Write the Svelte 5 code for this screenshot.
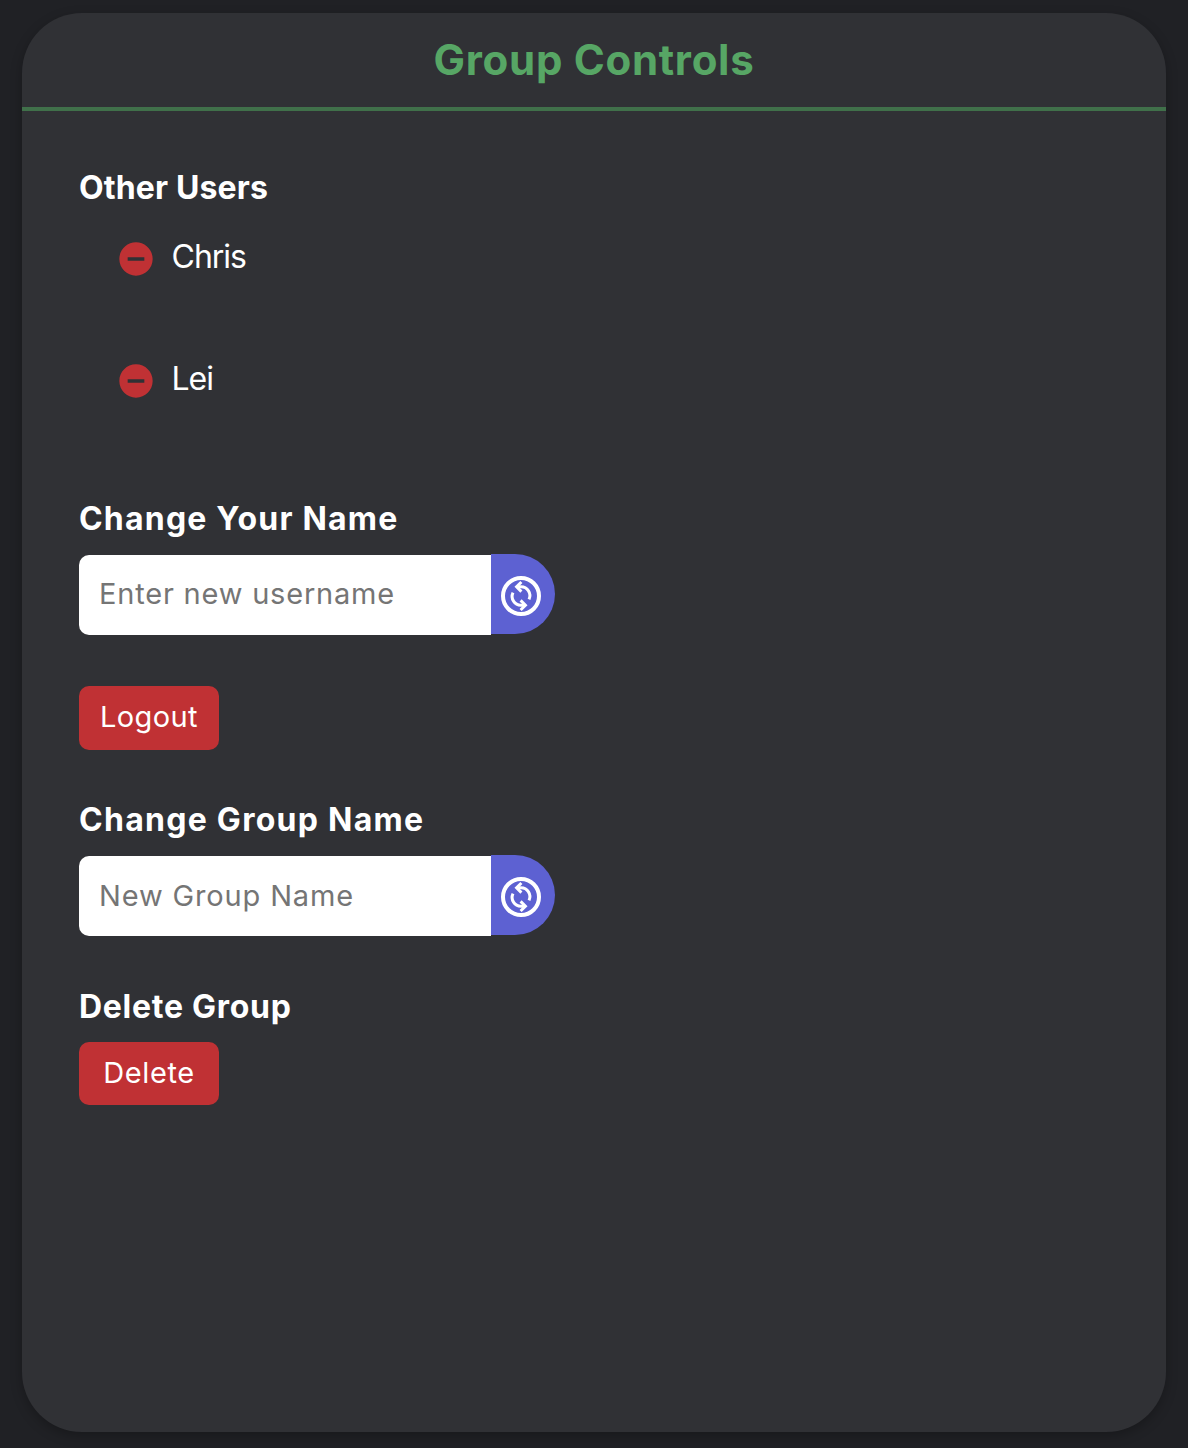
<script>
  const users = ['Chris', 'Lei'];
  let username = $state('');
  let groupName = $state('');
</script>

{#snippet changeIcon()}
  <svg class="change-icon" viewBox="0 0 24 24" aria-hidden="true">
    <circle cx="12" cy="12" r="9" stroke-width="2" />
    <g stroke-width="1.5">
      <path d="M12.2 5 9.8 7.4 12.2 9.8" />
      <path d="M10 7.4h2a4.4 4.4 0 0 1 4 6.3" />
      <path d="M11.8 19 14.2 16.6 11.8 14.2" />
      <path d="M14 16.6h-2a4.4 4.4 0 0 1-4-6.3" />
    </g>
  </svg>
{/snippet}

<main class="card">
  <header><h1>Group Controls</h1></header>
  <div class="content">
    <section class="users">
      <h2 class="t-users">Other Users</h2>
      <ul>
        {#each users as user}
          <li>
            <svg class="remove-icon" viewBox="0 0 24 24" aria-hidden="true">
              <path d="M12 2C6.48 2 2 6.48 2 12s4.48 10 10 10 10-4.48 10-10S17.52 2 12 2zm5 11H7v-2h10v2z" />
            </svg>
            <span class="user">{user}</span>
          </li>
        {/each}
      </ul>
    </section>

    <section class="name">
      <h2 class="t-name">Change Your Name</h2>
      <div class="field">
        <input class="i-name" placeholder="Enter new username" bind:value={username} />
        <button class="change" aria-label="Change name">{@render changeIcon()}</button>
      </div>
    </section>

    <button class="danger logout"><span>Logout</span></button>

    <section class="group">
      <h2 class="t-group">Change Group Name</h2>
      <div class="field">
        <input class="i-group" placeholder="New Group Name" bind:value={groupName} />
        <button class="change" aria-label="Change group name">{@render changeIcon()}</button>
      </div>
    </section>

    <section class="delete">
      <h2 class="t-delete">Delete Group</h2>
      <button class="danger del"><span>Delete</span></button>
    </section>
  </div>
</main>

<style>
  :global(body) {
    background: #202125;
  }
  .card {
    box-sizing: border-box;
    height: 1419px;
    margin: 13px 22px 16px;
    border-radius: 60px;
    background: #303135;
    color: #fff;
    font-family: Inter, "Liberation Sans", sans-serif;
    box-shadow: 0 4px 12px rgba(0, 0, 0, 0.25);
    overflow: hidden;
  }
  header {
    box-sizing: border-box;
    height: 98px;
    border-bottom: 4px solid #40704a;
    text-align: center;
  }
  h1 {
    margin: 0;
    font-size: 42px;
    line-height: 93px;
    font-weight: 650;
    letter-spacing: 0.7px;
    color: #57a665;
  }
  .content {
    display: flex;
    flex-direction: column;
    align-items: flex-start;
    padding: 53px 57px 0;
  }
  h2 {
    margin: 0;
    font-size: 32px;
    line-height: 48px;
    font-weight: 700;
    white-space: nowrap;
  }
  .t-users {
    letter-spacing: 0.15px;
  }
  .t-name {
    letter-spacing: 1.2px;
  }
  .t-group {
    letter-spacing: 1.27px;
  }
  .t-delete {
    letter-spacing: 0.72px;
  }
  ul {
    list-style: none;
    margin: 0;
    padding: 0 0 0 37px;
  }
  li {
    display: flex;
    height: 122px;
    gap: 15.5px;
  }
  .users {
    height: 331px;
  }
  .users ul {
    padding-top: 27px;
  }
  .remove-icon {
    width: 40px;
    height: 40px;
    fill: #c03134;
  }
  .user {
    font-size: 32px;
    line-height: 35px;
    font-weight: 430;
    letter-spacing: -1px;
  }
  .field {
    display: flex;
    height: 81px;
    margin-top: 11px;
  }
  input {
    box-sizing: border-box;
    width: 412px;
    height: 80px;
    margin-top: 1px;
    padding: 0 20px 2px;
    border: 0;
    border-radius: 10px 0 0 10px;
    background: #fff;
    color: #222;
    font: 400 29px Inter, "Liberation Sans", sans-serif;
    outline: none;
  }
  .i-name {
    letter-spacing: 0.8px;
    padding-bottom: 3px;
  }
  .i-group {
    letter-spacing: 0.85px;
  }
  input::placeholder {
    color: #757575;
    opacity: 1;
  }
  button {
    border: 0;
    padding: 0;
    color: #fff;
    font: 500 29px Inter, "Liberation Sans", sans-serif;
  }
  .change {
    display: flex;
    width: 64px;
    height: 80px;
    padding: 18px 0 0 6px;
    border-radius: 0 40px 40px 0;
    background: #5d61d2;
  }
  .change-icon {
    width: 48px;
    height: 48px;
    flex: none;
    fill: none;
    stroke: #fff;
  }
  .danger {
    display: block;
    width: 140px;
    height: 64px;
    padding-bottom: 3px;
    border-radius: 10px;
    background: #c03134;
    font-weight: 430;
    letter-spacing: 0.4px;
  }
  .logout {
    margin-top: 51px;
  }
  .group {
    margin-top: 46px;
  }
  .delete {
    margin-top: 47px;
  }
  .del {
    height: 63px;
    margin-top: 11px;
    padding-bottom: 2px;
    letter-spacing: 0.6px;
  }
</style>
